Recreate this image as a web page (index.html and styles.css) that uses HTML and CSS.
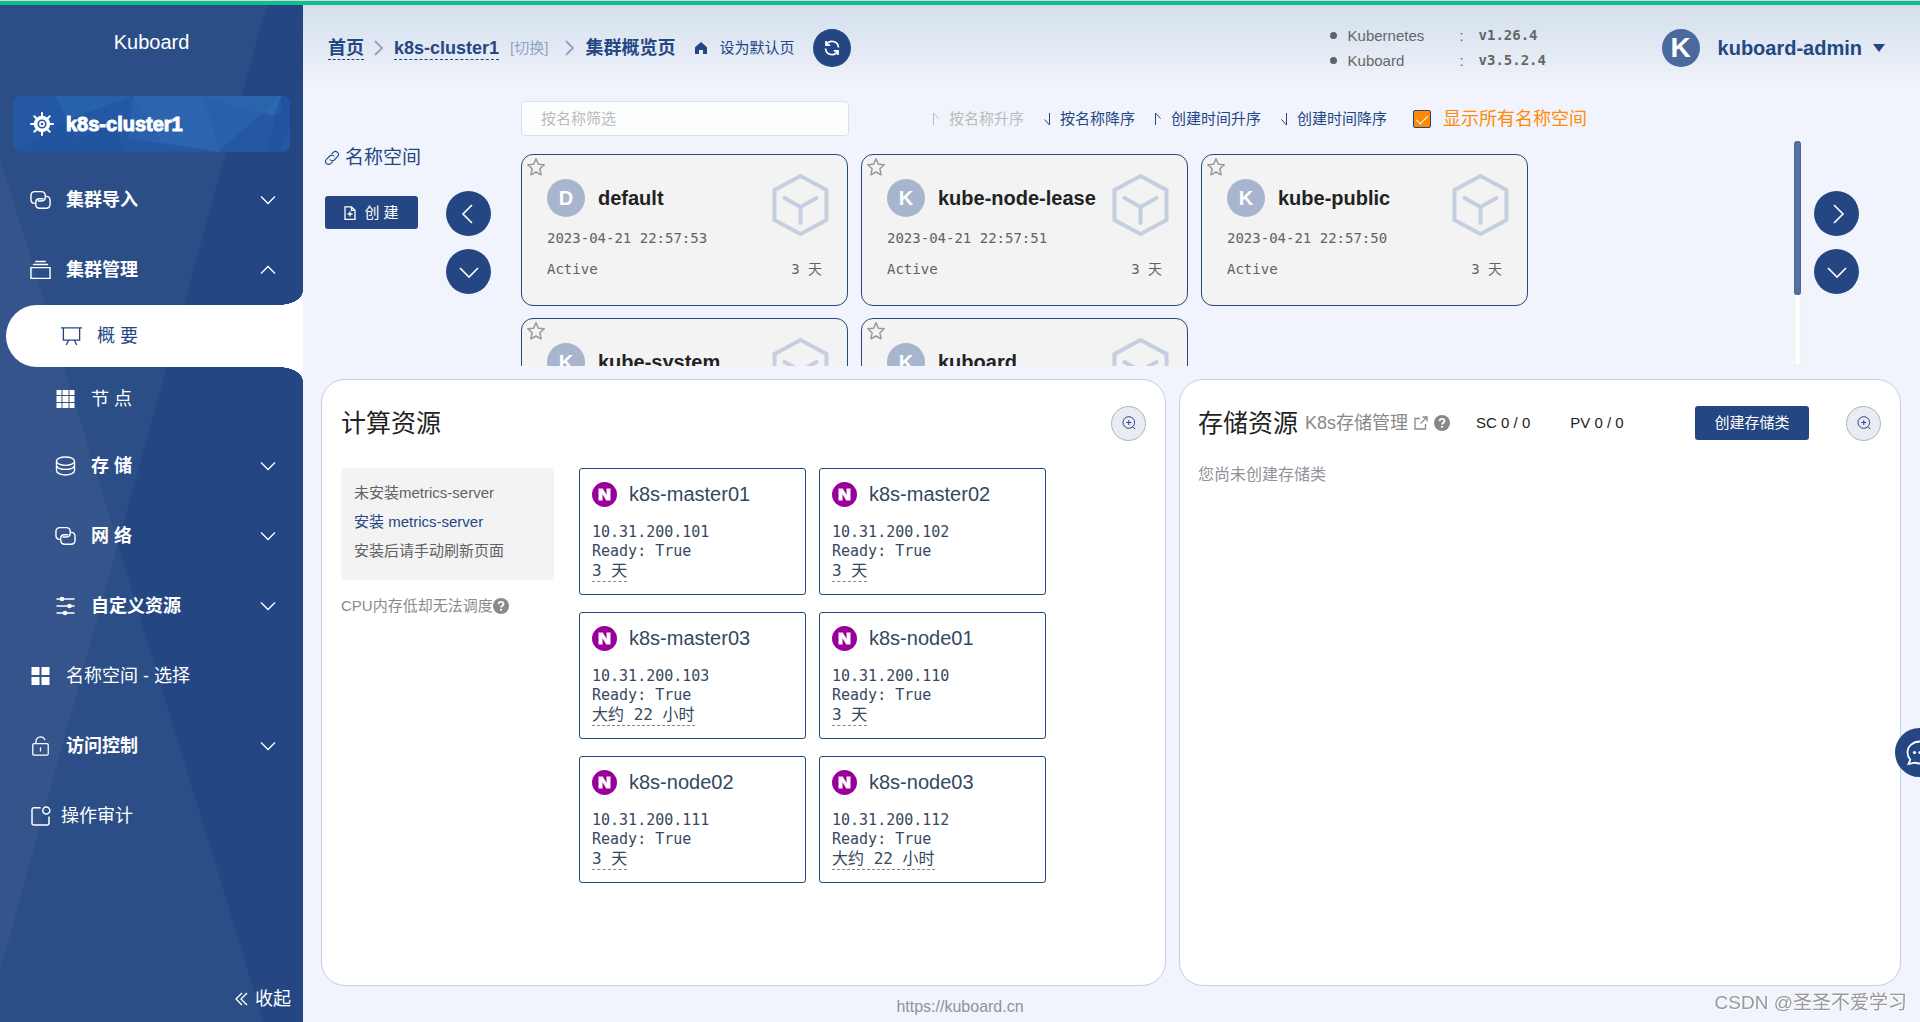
FILE: index.html
```html
<!DOCTYPE html>
<html lang="zh-CN">
<head>
<meta charset="utf-8">
<meta name="viewport" content="width=device-width, initial-scale=1">
<title>Kuboard</title>
<link rel="stylesheet" href="styles.css">
</head>
<body>
<svg class="sprite" aria-hidden="true">
  <symbol id="i-down" viewBox="0 0 16 16"><path d="M1 4.5l7 7 7-7" fill="none" stroke="currentColor" stroke-width="1.4"/></symbol>
  <symbol id="i-up" viewBox="0 0 16 16"><path d="M1 11.500l7-7 7 7" fill="none" stroke="currentColor" stroke-width="1.4"/></symbol>
  <symbol id="i-left" viewBox="0 0 20 20"><path d="M13 1L4 10l9 9" fill="none" stroke="currentColor" stroke-width="1.6"/></symbol>
  <symbol id="i-right" viewBox="0 0 20 20"><path d="M7 1l9 9-9 9" fill="none" stroke="currentColor" stroke-width="1.600"/></symbol>
  <symbol id="i-drop" viewBox="0 0 20 20"><path d="M1 6l9 9 9-9" fill="none" stroke="currentColor" stroke-width="1.600"/></symbol>
  <symbol id="i-sep" viewBox="0 0 10 16"><path d="M1 1l7 7-7 7" fill="none" stroke="currentColor" stroke-width="1.8"/></symbol>
  <symbol id="i-helm" viewBox="0 0 24 24"><g fill="none" stroke="currentColor"><circle cx="12" cy="12" r="6.400" stroke-width="3.600"/><circle cx="12" cy="12" r="2.100" stroke-width="1.700"/><path stroke-width="2" stroke-linecap="round" d="M12 4.500V1M12 19.500V23M4.500 12H1M19.500 12H23M6.500 6.500L4.300 4.300M17.500 17.500l2.200 2.200M6.500 17.500l-2.200 2.200M17.500 6.500l2.200-2.200"/></g></symbol>
  <symbol id="i-conn" viewBox="0 0 22 20"><g fill="none" stroke="currentColor" stroke-width="1.500" stroke-linecap="round"><path d="M5 13.500C2.800 13.500 1 12 1 9.500V5.500C1 3 2.800 1.200 5.300 1.200h6.400C14.200 1.200 16 3 16 5.500v1.700C16 9.500 14.500 11 12 11H8.500"/><path d="M17 6.200c2.500 0 4 1.800 4 4.300v4c0 2.500-1.800 4.200-4.300 4.200h-6.400C7.800 18.700 6 17 6 14.500v-2C6 10 7.500 8.700 10 8.700h3.500"/></g></symbol>
  <symbol id="i-stack" viewBox="0 0 22 20"><path d="M1 7.500h20v11.300H1zM3 4.200h16M5.500 1h11" fill="none" stroke="currentColor" stroke-width="1.500"/></symbol>
  <symbol id="i-board" viewBox="0 0 22 20"><path d="M0 1.500h22M2.500 1.500v12.800h17V1.500M8 14.500L5.500 19.500M14 14.500l2.500 5" fill="none" stroke="currentColor" stroke-width="1.400"/></symbol>
  <symbol id="i-grid9" viewBox="0 0 20 20"><path fill="currentColor" d="M1 1h5v5H1zM7 1h6v5H7zM14 1h5v5h-5zM1 7h5v6H1zM7 7h6v6H7zM14 7h5v6h-5zM1 14h5v5H1zM7 14h6v5H7zM14 14h5v5h-5z"/></symbol>
  <symbol id="i-coin" viewBox="0 0 20 20"><g fill="none" stroke="currentColor" stroke-width="1.400"><ellipse cx="10" cy="5.200" rx="9" ry="4.200"/><path d="M1 5.200v4.300c0 2.200 4 3.900 9 3.900s9-1.700 9-3.900V5.200M1 10v4.600C1 17 5 19 10 19s9-2 9-4.400V10"/></g></symbol>
  <symbol id="i-sliders" viewBox="0 0 20 20"><path d="M1 3h18M1 10h18M1 17h18" stroke="currentColor" stroke-width="1.600"/><g fill="currentColor"><circle cx="6.500" cy="3" r="2.300"/><circle cx="14" cy="10" r="2.300"/><circle cx="9.500" cy="17" r="2.300"/></g></symbol>
  <symbol id="i-menu4" viewBox="0 0 20 20"><path fill="currentColor" d="M1 1h8v8H1zM11 1h8v8h-8zM1 11h8v8H1zM11 11h8v8h-8z"/></symbol>
  <symbol id="i-lock" viewBox="0 0 20 22"><g fill="none" stroke="currentColor" stroke-width="1.400"><rect x="1.500" y="8.500" width="17" height="12.500" rx="1.500"/><path d="M5 8.500V6c0-2.800 2.200-5 5-5 2.300 0 4.200 1.500 4.800 3.600M10 12.500v4.500"/></g></symbol>
  <symbol id="i-audit" viewBox="0 0 20 20"><g fill="none" stroke="currentColor" stroke-width="1.500"><path d="M10 1.800H3.500A2 2 0 0 0 1.500 3.800v13.200a2 2 0 0 0 2 2h13a2 2 0 0 0 2-2V10.500"/><circle cx="15.800" cy="4.500" r="3.500"/></g></symbol>
  <symbol id="i-dbl" viewBox="0 0 13 14"><path d="M7 1L1 7l6 6M12 1L6 7l6 6" fill="none" stroke="currentColor" stroke-width="1.400"/></symbol>
  <symbol id="i-home" viewBox="0 0 14 14"><path fill="currentColor" d="M7 1l6 5.200V13H9V9H5v4H1V6.200z"/></symbol>
  <symbol id="i-refresh" viewBox="0 0 18 18"><g fill="none" stroke="currentColor" stroke-width="1.700"><path d="M3.200 6A6.500 6.500 0 0 1 15.500 8.500M3 2v4.200h4.200M14.800 12A6.500 6.500 0 0 1 2.500 9.500M15 16v-4.200h-4.200"/></g></symbol>
  <symbol id="i-asc" viewBox="0 0 10 14"><path d="M2.500 13V1l5 5.500" fill="none" stroke="currentColor"/></symbol>
  <symbol id="i-desc" viewBox="0 0 10 14"><path d="M7.500 1v12l-5-5.500" fill="none" stroke="currentColor"/></symbol>
  <symbol id="i-link" viewBox="0 0 16 16"><g fill="none" stroke="currentColor" stroke-width="1.100" transform="rotate(-45 8 8)"><path d="M6 11H3.200a3 3 0 0 1 0-6h4.600a3 3 0 0 1 2.800 3.500"/><path d="M10 5h2.800a3 3 0 0 1 0 6H8.200a3 3 0 0 1-2.800-3.500"/></g></symbol>
  <symbol id="i-doc" viewBox="0 0 12 14"><path d="M1 .800h6.500L11 4.300v9H1zM7.500.800v3.500H11M6 5.500v5M3.500 8h5" fill="none" stroke="currentColor" stroke-width="1.300"/></symbol>
  <symbol id="i-star" viewBox="0 0 20 20"><path d="M10 1.800l2.400 5.400 5.800.600-4.300 4 1.200 6L10 15l-5.100 2.800 1.200-6-4.300-4 5.800-.600z" fill="none" stroke="currentColor" stroke-width="1.500" stroke-linejoin="round"/></symbol>
  <symbol id="i-cube" viewBox="0 0 56 64"><g fill="none" stroke="currentColor" stroke-width="4"><path d="M28 3l26 14v30L28 61 2 47V17z"/><path d="M12 25l16 9 16-9M28 34v16" stroke-linecap="round"/></g></symbol>
  <symbol id="i-zoom" viewBox="0 0 14 14"><g fill="none" stroke="currentColor"><circle cx="6.800" cy="6.500" r="5.800"/><path d="M6.800 4v5M4.300 6.500h5M11 10.800l2.300 2.400"/></g></symbol>
  <symbol id="i-help" viewBox="0 0 16 16"><circle cx="8" cy="8" r="8" fill="currentColor"/><path d="M5.600 6.300C5.600 4.700 6.600 3.800 8 3.800s2.500.900 2.500 2.100c0 1.700-2.400 1.900-2.400 3.600" fill="none" stroke="#fff" stroke-width="1.800"/><circle cx="8.100" cy="11.800" r="1.100" fill="#fff"/></symbol>
  <symbol id="i-ext" viewBox="0 0 14 14"><path d="M6 2.500H1v10.500h10.500V8M8.500 1H13v4.500M13 1L6.500 7.500" fill="none" stroke="currentColor" stroke-width="1.300"/></symbol>
  <symbol id="i-node" viewBox="0 0 25 25"><circle cx="12.500" cy="12.500" r="12.500" fill="#909"/><path fill="#fff" d="M6.500 18.500v-12h4.200l3.800 6.300V6.500h4v12h-4.200l-3.800-6.300v6.300z"/></symbol>
  <symbol id="i-chat" viewBox="0 0 28 26"><path d="M14 1.500c7 0 12.500 4.700 12.500 11S21 23.500 14 23.500c-2 0-3.500-.200-5-.900L2.500 24l1.800-4.500C2.500 17.600 1.500 15.300 1.500 12.500c0-6.300 5.500-11 12.500-11z" fill="none" stroke="currentColor" stroke-width="1.800"/><g fill="currentColor"><circle cx="8.500" cy="12.500" r="1.600"/><circle cx="14" cy="12.500" r="1.600"/><circle cx="19.500" cy="12.500" r="1.600"/></g></symbol>
</svg>
<div class="progress"></div>
<div class="shell">
  <aside class="sidebar">
    <div class="brand">Kuboard</div>
    <a class="cluster" href="#"><svg class="cluster-art" viewBox="0 0 277 56" preserveAspectRatio="none" aria-hidden="true"><path fill="#2b65ae" opacity=".7" d="M42 0h78l-66 24z"/><path fill="#2a62ad" opacity=".8" d="M120 0h68l80 20V0L205 56l-30-5-60-8z"/><path fill="#2f6cb2" opacity=".6" d="M188 0h80l-8 20z"/><path fill="#1f4f99" d="M0 56L66 18l-6 24 40-12 15 26z" opacity=".3"/><path fill="#3670b8" opacity=".3" d="M120 0l70 0 18 56-60-10z"/><path fill="#1f4f9b" opacity=".4" d="M268 0h9v30l-12 26h-12z"/></svg><svg class="ico24"><use href="#i-helm"/></svg><span>k8s-cluster1</span></a>
    <nav class="nav">
      <button class="row strong" type="button"><svg class="ico"><use href="#i-conn"/></svg><span>集群导入</span><svg class="chev"><use href="#i-down"/></svg></button>
      <button class="row strong" type="button"><svg class="ico"><use href="#i-stack"/></svg><span>集群管理</span><svg class="chev"><use href="#i-up"/></svg></button>
      <a class="active" href="#"><svg class="ico"><use href="#i-board"/></svg><span>概 要</span></a>
      <a class="row sub short" href="#"><svg class="ico"><use href="#i-grid9"/></svg><span>节 点</span></a>
      <button class="row sub strong" type="button"><svg class="ico"><use href="#i-coin"/></svg><span>存 储</span><svg class="chev"><use href="#i-down"/></svg></button>
      <button class="row sub strong" type="button"><svg class="ico"><use href="#i-conn"/></svg><span>网 络</span><svg class="chev"><use href="#i-down"/></svg></button>
      <button class="row sub strong" type="button"><svg class="ico"><use href="#i-sliders"/></svg><span>自定义资源</span><svg class="chev"><use href="#i-down"/></svg></button>
      <a class="row" href="#"><svg class="ico"><use href="#i-menu4"/></svg><span>名称空间 - 选择</span></a>
      <button class="row strong" type="button"><svg class="ico"><use href="#i-lock"/></svg><span>访问控制</span><svg class="chev"><use href="#i-down"/></svg></button>
      <a class="row tight" href="#"><svg class="ico"><use href="#i-audit"/></svg><span>操作审计</span></a>
    </nav>
    <button class="collapse" type="button"><svg class="dbl"><use href="#i-dbl"/></svg>收起</button>
  </aside>

  <main class="main">
    <header class="top">
      <nav class="crumbs">
        <a class="crumb" href="#">首页</a>
        <svg class="sep"><use href="#i-sep"/></svg>
        <a class="crumb" href="#">k8s-cluster1</a>
        <a class="switch" href="#">[切换]</a>
        <svg class="sep sep-far"><use href="#i-sep"/></svg>
        <span class="here">集群概览页</span>
        <button class="default-page" type="button"><svg class="ico14"><use href="#i-home"/></svg>设为默认页</button>
        <button class="refresh" type="button" aria-label="刷新"><svg class="ico18"><use href="#i-refresh"/></svg></button>
      </nav>
      <div class="top-right">
        <ul class="versions">
          <li><span class="v-name">Kubernetes</span><span class="v-colon">:</span><b>v1.26.4</b></li>
          <li><span class="v-name">Kuboard</span><span class="v-colon">:</span><b>v3.5.2.4</b></li>
        </ul>
        <button class="user" type="button"><span class="user-face">K</span>kuboard-admin<span class="caret"></span></button>
      </div>
    </header>

    <div class="body">
      <section class="spaces">
        <div class="spaces-side">
          <a class="spaces-title" href="#"><svg class="ico16"><use href="#i-link"/></svg>名称空间</a>
          <button class="btn create" type="button"><svg class="doc"><use href="#i-doc"/></svg>创 建</button>
        </div>
        <div class="pager">
          <button class="round" type="button" aria-label="向左"><svg class="ico20"><use href="#i-left"/></svg></button>
          <button class="round" type="button" aria-label="展开"><svg class="ico20"><use href="#i-drop"/></svg></button>
        </div>
        <div class="spaces-main">
          <div class="filters">
            <input class="search" type="text" placeholder="按名称筛选" aria-label="按名称筛选">
            <div class="sorts">
              <button type="button" disabled><svg class="arrow"><use href="#i-asc"/></svg>按名称升序</button>
              <button type="button"><svg class="arrow"><use href="#i-desc"/></svg>按名称降序</button>
              <button type="button"><svg class="arrow"><use href="#i-asc"/></svg>创建时间升序</button>
              <button type="button"><svg class="arrow"><use href="#i-desc"/></svg>创建时间降序</button>
            </div>
            <label class="show-all"><input type="checkbox" checked>显示所有名称空间</label>
          </div>
          <div class="viewport">
            <div class="cards">
              <article class="card"><svg class="star"><use href="#i-star"/></svg><div class="card-head"><span class="face">D</span><h3>default</h3></div><svg class="cube"><use href="#i-cube"/></svg><p class="mono">2023-04-21 22:57:53</p><p class="mono split"><span>Active</span><span>3 天</span></p></article>
              <article class="card"><svg class="star"><use href="#i-star"/></svg><div class="card-head"><span class="face">K</span><h3>kube-node-lease</h3></div><svg class="cube"><use href="#i-cube"/></svg><p class="mono">2023-04-21 22:57:51</p><p class="mono split"><span>Active</span><span>3 天</span></p></article>
              <article class="card"><svg class="star"><use href="#i-star"/></svg><div class="card-head"><span class="face">K</span><h3>kube-public</h3></div><svg class="cube"><use href="#i-cube"/></svg><p class="mono">2023-04-21 22:57:50</p><p class="mono split"><span>Active</span><span>3 天</span></p></article>
              <article class="card"><svg class="star"><use href="#i-star"/></svg><div class="card-head"><span class="face">K</span><h3>kube-system</h3></div><svg class="cube"><use href="#i-cube"/></svg></article>
              <article class="card"><svg class="star"><use href="#i-star"/></svg><div class="card-head"><span class="face">K</span><h3>kuboard</h3></div><svg class="cube"><use href="#i-cube"/></svg></article>
            </div>
            <div class="track"><div class="thumb"></div></div>
          </div>
        </div>
        <div class="pager">
          <button class="round" type="button" aria-label="向右"><svg class="ico20"><use href="#i-right"/></svg></button>
          <button class="round" type="button" aria-label="展开"><svg class="ico20"><use href="#i-drop"/></svg></button>
        </div>
      </section>

      <div class="panels">
        <section class="panel">
          <div class="panel-head"><h2>计算资源</h2><button class="zoom" type="button" aria-label="放大"><svg class="ico14"><use href="#i-zoom"/></svg></button></div>
          <div class="compute">
            <div>
              <div class="notice"><p>未安装metrics-server</p><p><a href="#">安装 metrics-server</a></p><p>安装后请手动刷新页面</p></div>
              <p class="hint">CPU内存低却无法调度<svg class="ico16"><use href="#i-help"/></svg></p>
            </div>
            <div class="nodes">
              <article class="node"><h3><svg class="n-ico"><use href="#i-node"/></svg>k8s-master01</h3><p>10.31.200.101</p><p>Ready: True</p><span class="age">3 天</span></article>
              <article class="node"><h3><svg class="n-ico"><use href="#i-node"/></svg>k8s-master02</h3><p>10.31.200.102</p><p>Ready: True</p><span class="age">3 天</span></article>
              <article class="node"><h3><svg class="n-ico"><use href="#i-node"/></svg>k8s-master03</h3><p>10.31.200.103</p><p>Ready: True</p><span class="age">大约 22 小时</span></article>
              <article class="node"><h3><svg class="n-ico"><use href="#i-node"/></svg>k8s-node01</h3><p>10.31.200.110</p><p>Ready: True</p><span class="age">3 天</span></article>
              <article class="node"><h3><svg class="n-ico"><use href="#i-node"/></svg>k8s-node02</h3><p>10.31.200.111</p><p>Ready: True</p><span class="age">3 天</span></article>
              <article class="node"><h3><svg class="n-ico"><use href="#i-node"/></svg>k8s-node03</h3><p>10.31.200.112</p><p>Ready: True</p><span class="age">大约 22 小时</span></article>
            </div>
          </div>
        </section>
        <section class="panel storage">
          <div class="panel-head">
            <h2>存储资源</h2>
            <a class="manage" href="#">K8s存储管理<svg class="ico14"><use href="#i-ext"/></svg></a>
            <svg class="ico16 help"><use href="#i-help"/></svg>
            <span class="count">SC 0 / 0</span>
            <span class="count pv">PV 0 / 0</span>
            <button class="btn make" type="button">创建存储类</button>
            <button class="zoom" type="button" aria-label="放大"><svg class="ico14"><use href="#i-zoom"/></svg></button>
          </div>
          <p class="empty">您尚未创建存储类</p>
        </section>
      </div>
    </div>
    <footer class="foot"><a href="#">https://kuboard.cn</a></footer>
  </main>
</div>
<button class="chat" type="button" aria-label="聊天"><svg class="chat-ico"><use href="#i-chat"/></svg></button>
<div class="mark">CSDN @圣圣不爱学习</div>
</body>
</html>
```
FILE: styles.css
```css
:root {
  --navy: #244783;
  --side: 303px;
  --mono: "DejaVu Sans Mono", "Noto Sans CJK SC", monospace;
}

* { box-sizing: border-box; }

body {
  margin: 0;
  min-height: 100vh;
  display: flex;
  flex-direction: column;
  overflow-x: hidden;
  background: #f1f4fc;
  color: #606266;
  font: 15px/20px "Liberation Sans", "Noto Sans CJK SC", sans-serif;
}

h2, h3, p, ul { margin: 0; padding: 0; }
a { color: inherit; text-decoration: none; }
button { padding: 0; border: 0; background: none; color: inherit; font: inherit; cursor: pointer; }
svg { flex: none; display: block; }
.sprite { position: absolute; width: 0; height: 0; }

.ico { width: 21px; height: 20px; }
.ico14 { width: 14px; height: 14px; }
.ico16 { width: 16px; height: 16px; }
.ico18 { width: 18px; height: 18px; }
.ico20 { width: 20px; height: 20px; }
.ico24 { width: 24px; height: 24px; }

.progress { height: 5px; border-top: 1px solid #d5d5dd; background: #0fbe8d; }
.shell { flex: 1; display: flex; }

/* sidebar */
.sidebar {
  position: relative;
  flex: none;
  width: var(--side);
  display: flex;
  flex-direction: column;
  background: var(--navy);
  color: #fff;
}
.sidebar::before, .sidebar::after {
  content: "";
  position: absolute;
  inset: 0;
  background: rgba(255, 255, 255, 0.04);
  clip-path: polygon(0 0, 88% 0, 0 95%);
}
.sidebar::after { clip-path: polygon(0 15%, 87% 100%, 0 100%); pointer-events: none; }
.sidebar > * { position: relative; z-index: 1; }

.brand { padding: 23px 0 25px; font-size: 20px; line-height: 28px; text-align: center; }
.cluster {
  margin: 15px 13px 13px;
  height: 56px;
  padding-left: 17px;
  display: flex;
  align-items: center;
  gap: 12px;
  overflow: hidden;
  border-radius: 7px;
  background: #2458a4;
  font-size: 20px;
  font-weight: 700;
  -webkit-text-stroke: 1px #fff;
}
.cluster > * { position: relative; }
.cluster > .cluster-art { position: absolute; inset: 0; width: 100%; height: 100%; }

.nav { display: flex; flex-direction: column; font-size: 18px; line-height: 24px; }
.row {
  height: 70px;
  padding: 0 27px 0 30px;
  display: flex;
  align-items: center;
  gap: 15px;
  text-align: left;
}
.row.sub { padding-left: 55px; }
.row.short { height: 64px; }
.row.tight { gap: 10px; }
.row.strong { font-weight: 700; }
.chev { width: 16px; height: 16px; margin-left: auto; }
.active {
  position: relative;
  height: 62px;
  margin-left: 6px;
  padding-left: 55px;
  display: flex;
  align-items: center;
  gap: 15px;
  border-radius: 31px 0 0 31px;
  background: #fff;
  color: var(--navy);
}
.active::before, .active::after {
  content: "";
  position: absolute;
  right: 0;
  bottom: 100%;
  width: 24px;
  height: 14px;
  background: radial-gradient(ellipse 24px 14px at 0 0, transparent 98%, #fff 100%);
}
.active::after {
  bottom: auto;
  top: 100%;
  background: radial-gradient(ellipse 24px 14px at 0 100%, transparent 98%, #fff 100%);
}
.collapse {
  margin: auto 12px 11px auto;
  display: flex;
  align-items: center;
  gap: 7px;
  font-size: 18px;
  line-height: 24px;
}
.dbl { width: 13px; height: 14px; }

/* header */
.main { flex: 1; min-width: 0; display: flex; flex-direction: column; }
.top {
  height: 86px;
  padding: 0 35px 0 25px;
  display: flex;
  align-items: center;
  justify-content: space-between;
  background: linear-gradient(#d3dfec, #f1f4fc);
  color: var(--navy);
}
.crumbs { display: flex; align-items: center; }
.crumb, .here { font-size: 18px; line-height: 22px; font-weight: 700; }
.crumb { border-bottom: 1px dashed var(--navy); }
.sep { width: 10px; height: 16px; margin: 0 10px; color: #8fa2c3; }
.sep-far { margin-left: 17px; }
.switch { margin-left: 11px; color: #93a3c1; }
.default-page { margin-left: 17px; display: flex; align-items: center; gap: 11px; }
.default-page svg { margin-left: 2px; }
.refresh {
  width: 38px;
  height: 38px;
  margin-left: 19px;
  display: grid;
  place-items: center;
  border-radius: 50%;
  background: var(--navy);
  color: #fff;
}
.top-right { display: flex; align-items: center; }
.versions { list-style: none; color: #666; line-height: 25px; }
.versions li { display: flex; align-items: center; }
.versions li::before { content: ""; width: 7px; height: 7px; margin-right: 11px; border-radius: 50%; background: #606266; }
.v-name { width: 112px; }
.v-colon { width: 19px; }
.versions b { width: 183px; font-family: var(--mono); font-size: 14px; }
.user { display: flex; align-items: center; font-size: 20px; font-weight: 700; }
.user-face {
  width: 38px;
  height: 38px;
  margin-right: 18px;
  border-radius: 50%;
  background: #4a6a9d;
  color: #fff;
  font-size: 28px;
  line-height: 38px;
}
.caret { margin-left: 11px; border: 6px solid transparent; border-top: 8px solid var(--navy); border-bottom: 0; }

/* namespaces */
.body { flex: 1; padding: 0 19px 0 18px; display: flex; flex-direction: column; gap: 13px; }
.spaces { display: flex; padding: 10px 42px 0 0; }
.spaces-side { width: 125px; padding: 45px 0 0 3px; }
.spaces-title { display: flex; align-items: center; gap: 5px; color: var(--navy); font-size: 19px; line-height: 24px; }
.btn { border-radius: 3px; background: var(--navy); color: #fff; }
.create { width: 93px; height: 33px; margin-top: 26px; margin-left: 1px; display: flex; align-items: center; justify-content: center; gap: 8px; }
.doc { width: 12px; height: 14px; }
.pager { flex: none; width: 45px; padding-top: 90px; display: flex; flex-direction: column; gap: 13px; }
.round { width: 45px; height: 45px; display: grid; place-items: center; border-radius: 50%; background: var(--navy); color: #fff; }
.spaces-main { flex: 1; min-width: 0; margin: 0 13px 0 30px; }
.filters { height: 35px; margin-bottom: 5px; display: flex; align-items: center; }
.search {
  width: 328px;
  height: 35px;
  padding: 0 19px;
  border: 1px solid #dcdfe6;
  border-radius: 4px;
  background: #fcfdff;
  color: #606266;
  font: inherit;
}
.search::placeholder { color: #bbb; }
.sorts { display: flex; gap: 18px; margin-left: 82px; color: var(--navy); }
.sorts button { display: flex; align-items: center; gap: 8px; }
.sorts button:disabled { color: #bbb; }
.arrow { width: 10px; height: 14px; }
.show-all { margin-left: 26px; display: flex; align-items: center; gap: 12px; color: #ff8a05; font-size: 18px; }
.show-all input {
  appearance: none;
  width: 18px;
  height: 18px;
  margin: 0;
  display: grid;
  place-items: center;
  border: 1px solid var(--navy);
  border-radius: 2px;
  background: #ff8a05;
}
.show-all input::before {
  content: "";
  width: 5px;
  height: 10px;
  border: solid #fff;
  border-width: 0 1px 1px 0;
  transform: rotate(45deg);
}
.viewport { height: 225px; display: flex; overflow: hidden; }
.cards { flex: 1; padding-top: 13px; display: flex; flex-wrap: wrap; gap: 12px 13px; align-content: flex-start; overflow: hidden; }
.card {
  position: relative;
  width: 327px;
  height: 152px;
  padding: 24px 25px;
  border: 1px solid var(--navy);
  border-radius: 12px;
  background: #f3f3f3;
}
.star { position: absolute; top: 2px; left: 4px; width: 20px; height: 20px; color: #999; }
.cube { position: absolute; top: 18px; right: 18px; width: 57px; height: 64px; color: #c6cfe0; }
.card-head { display: flex; align-items: center; gap: 13px; }
.card-head h3 { color: #222; font-size: 20px; line-height: 38px; }
.face { width: 38px; height: 38px; border-radius: 50%; background: #a7b5ce; color: #fff; font-size: 20px; font-weight: 700; line-height: 38px; text-align: center; }
.mono { margin-top: 11px; font-family: var(--mono); font-size: 14px; line-height: 20px; }
.split { display: flex; justify-content: space-between; }
.track { width: 7px; height: 225px; border-radius: 4px; background: #fff; box-shadow: inset 0 0 2px #ccc; }
.thumb { height: 154px; border-radius: 4px; background: #58729f; box-shadow: inset 0 0 2px var(--navy); }

/* panels */
.panels { flex: 1; display: grid; grid-template-columns: 845fr 722fr; gap: 13px; }
.panel { padding: 24px 19px; border: 1px solid #c3cfe3; border-radius: 24px; background: #fff; }
.storage { padding-left: 18px; }
.panel-head { height: 38px; display: flex; align-items: center; }
.panel-head h2 { color: #222; font-size: 25px; line-height: 36px; font-weight: 400; }
.zoom { width: 35px; height: 35px; margin-left: auto; display: grid; place-items: center; border: 1px solid #a7b5ce; border-radius: 50%; background: #e9ecf3; color: var(--navy); }
.compute { margin-top: 26px; display: flex; gap: 25px; }
.notice { width: 213px; height: 112px; padding: 10px 13px; border-radius: 5px; background: #f3f3f3; line-height: 29px; }
.notice a { color: var(--navy); }
.hint { margin-top: 16px; display: flex; align-items: center; color: #8a8a8a; white-space: nowrap; }
.nodes { flex: 1; display: grid; grid-template-columns: repeat(auto-fill, 227px); gap: 17px 13px; align-content: start; }
.node { height: 127px; padding: 12px 12px 0; border: 1px solid var(--navy); border-radius: 3px; color: #34495e; font-family: var(--mono); line-height: 19px; }
.node h3 { margin-bottom: 16px; display: flex; align-items: center; gap: 12px; font: 20px/26px "Liberation Sans", sans-serif; }
.n-ico { width: 25px; height: 25px; }
.age { display: inline-block; border-bottom: 1px dashed #888; font-size: 16px; line-height: 20px; }

.manage { margin-left: 7px; display: flex; align-items: center; gap: 6px; color: #888; font-size: 18px; }
.help { margin-left: 6px; color: #888; }
.count { margin-left: 26px; color: #222; }
.pv { margin-left: 40px; }
.make { width: 114px; height: 34px; margin-left: auto; }
.make + .zoom { margin-left: 37px; }
.empty { margin-top: 23px; color: #909399; font-size: 16px; }

.foot { height: 36px; margin-left: calc(-1 * var(--side)); padding-top: 11px; text-align: center; color: #909399; font-size: 16px; }

/* floating items */
.chat { position: fixed; right: -24px; bottom: 245px; width: 49px; height: 49px; padding-left: 11px; border-radius: 50%; background: var(--navy); color: #fff; }
.chat-ico { width: 28px; height: 26px; }
.mark { position: fixed; right: 13px; bottom: 7px; color: #999; font-size: 19px; line-height: 24px; text-shadow: 1px 1px 1px #fff; }
```
